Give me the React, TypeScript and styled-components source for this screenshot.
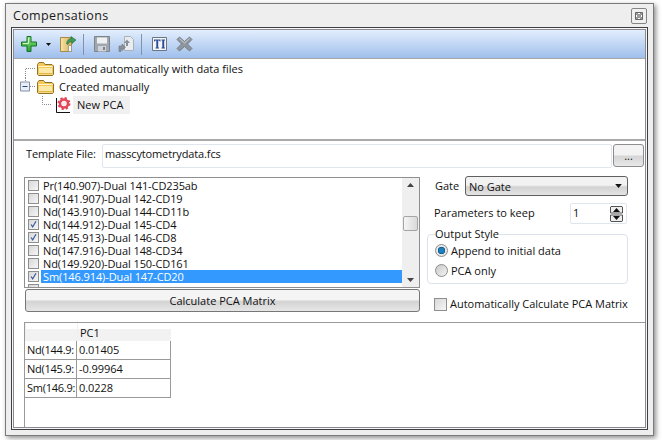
import React from "react";
import styled, { createGlobalStyle } from "styled-components";

const Global = createGlobalStyle`
  html, body { margin: 0; padding: 0; background: #fff; }
  body { font-family: "Open Sans", "Liberation Sans", sans-serif; font-size: 11px; color: #111; }
  * { box-sizing: border-box; }
`;

const Page = styled.div`
  width: 662px;
  height: 440px;
  padding: 3px 8px 4px 5px;
  overflow: hidden;
`;
const Window = styled.div`
  width: 649px;
  height: 433px;
  background: #eeeeee;
  border: 1px solid #7a7a7a;
  box-shadow: 2px 2px 5px rgba(0, 0, 0, 0.45);
  padding: 0 5px 5px 5px;
  display: flex;
  flex-direction: column;
`;
const TitleBar = styled.div`
  height: 23px;
  flex: none;
  display: flex;
  align-items: center;
  justify-content: space-between;
  padding: 0 1px 0 2px;
`;
const Title = styled.span`
  font-size: 12.5px;
  letter-spacing: 0.35px;
  color: #1a1a1a;
`;
const CloseButton = styled.button`
  width: 16px;
  height: 16px;
  padding: 0;
  border: 1px solid #858585;
  border-radius: 2px;
  background: #f1f1f1;
  display: flex;
  align-items: center;
  justify-content: center;
`;
const Outer = styled.div`
  flex: 1;
  min-height: 0;
  border: 1px solid #3f3f46;
  padding: 1px;
  background: #f6f6f6;
  display: flex;
`;
const Frame = styled.div`
  flex: 1;
  min-width: 0;
  border: 1px solid #8a8a90;
  background: #fff;
  display: flex;
  flex-direction: column;
`;
const Toolbar = styled.div`
  height: 29px;
  flex: none;
  background: linear-gradient(#e3eefd, #9fbfec);
  border-bottom: 1px solid #a8a8a8;
  display: flex;
  align-items: center;
  padding-left: 7px;
`;
const ToolIcon = styled.span<{ $gap?: number }>`
  display: flex;
  margin-right: ${(p) => p.$gap ?? 0}px;
`;
const ToolSep = styled.span`
  width: 1px;
  height: 21px;
  background: #7f93ad;
  margin: 0 10px 0 6px;
`;
const Tree = styled.div`
  height: 82px;
  flex: none;
  border-bottom: 2px solid #a9a9a9;
  padding-top: 1px;
  display: flex;
  flex-direction: column;
`;
const TreeRow = styled.div`
  height: 18px;
  display: flex;
  align-items: center;
  padding-left: 6px;
`;
const TreeIndent = styled.span`
  width: 22px;
  flex: none;
`;
const TreeLabel = styled.span<{ $selected?: boolean; $left?: number }>`
  margin-left: ${(p) => p.$left ?? 5}px;
  padding: ${(p) => (p.$selected ? "0 7px 0 4px" : "0")};
  height: 18px;
  line-height: 18px;
  background: ${(p) => (p.$selected ? "#f0f0f0" : "transparent")};
  white-space: nowrap;
`;
const Form = styled.div`
  flex: 1;
  min-height: 0;
  display: flex;
  flex-direction: column;
`;
const TemplateRow = styled.div`
  height: 25px;
  margin-top: 2px;
  flex: none;
  display: flex;
  align-items: center;
  padding: 0 1px 0 12px;
`;
const TemplateLabel = styled.span`
  width: 76px;
  flex: none;
  padding-bottom: 4px;
  letter-spacing: -0.1px;
`;
const TemplateInput = styled.div`
  flex: 1;
  height: 24px;
  border: 1px solid #dfe6ee;
  border-radius: 2px;
  padding: 0 2px;
  line-height: 17px;
  letter-spacing: -0.13px;
  background: #fff;
`;
const BrowseButton = styled.button`
  width: 31px;
  height: 23px;
  margin-left: 1px;
  padding: 0;
  border: 1px solid #8d8d8d;
  border-radius: 3px;
  background: linear-gradient(#f3f3f3 0 45%, #d6d6d6 55%, #e8e8e8);
  font: inherit;
  color: #111;
`;
const Middle = styled.div`
  height: 136px;
  margin-top: 8px;
  flex: none;
  display: flex;
  padding-left: 10px;
  gap: 7px;
`;
const LeftColumn = styled.div`
  width: 396px;
  flex: none;
  display: flex;
  flex-direction: column;
`;
const ListBox = styled.div`
  height: 111px;
  margin-top: 1px;
  border: 1px solid #8f8f8f;
  display: flex;
  overflow: hidden;
  background: #fff;
`;
const ListRows = styled.div`
  flex: 1;
  min-width: 0;
  overflow: hidden;
  padding: 1px 0 0 3px;
`;
const ListRow = styled.div`
  height: 13px;
  display: flex;
  align-items: center;
`;
const ListText = styled.span<{ $selected?: boolean }>`
  flex: 1;
  height: 13px;
  line-height: 13px;
  margin-left: 2px;
  padding-left: 2px;
  letter-spacing: -0.1px;
  background: ${(p) => (p.$selected ? "#3399ff" : "transparent")};
  color: ${(p) => (p.$selected ? "#fff" : "#111")};
  white-space: nowrap;
`;
const CheckBox = styled.span<{ $size?: number }>`
  width: ${(p) => p.$size ?? 11}px;
  height: ${(p) => p.$size ?? 11}px;
  flex: none;
  border: 1px solid #8e8e8e;
  background: linear-gradient(135deg, #d8d8d8, #f6f6f6);
  display: flex;
  align-items: center;
  justify-content: center;
`;
const ScrollBar = styled.div`
  width: 17px;
  flex: none;
  background: #efefef;
  display: flex;
  flex-direction: column;
  align-items: center;
`;
const ScrollArrow = styled.span`
  height: 14px;
  flex: none;
  display: flex;
  align-items: center;
  justify-content: center;
`;
const ScrollTrack = styled.div`
  flex: 1;
  align-self: stretch;
  padding: 24px 1px 0 1px;
`;
const ScrollThumb = styled.div`
  height: 15px;
  border: 1px solid #a5a5a5;
  border-radius: 2px;
  background: linear-gradient(90deg, #f5f5f5, #d9d9d9);
`;
const CalcButton = styled.button`
  height: 23px;
  margin: 1px 0 0 1px;
  padding: 0;
  border: 1px solid #777;
  border-radius: 3px;
  background: linear-gradient(#f4f4f4 0 45%, #d4d4d4 55%, #e6e6e6);
  font: inherit;
  color: #111;
`;
const RightColumn = styled.div`
  width: 201px;
  flex: none;
  display: flex;
  flex-direction: column;
`;
const GateRow = styled.div`
  height: 20px;
  display: flex;
  align-items: center;
  padding-left: 8px;
`;
const GateLabel = styled.span`
  width: 30px;
  flex: none;
  padding-bottom: 2px;
`;
const Select = styled.div`
  flex: 1;
  height: 20px;
  border: 1px solid #606060;
  border-radius: 3px;
  background: linear-gradient(#f2f2f2 0 45%, #d2d2d2 55%, #e4e4e4);
  display: flex;
  align-items: center;
  justify-content: space-between;
  padding: 0 5px 0 3px;
`;
const KeepRow = styled.div`
  height: 21px;
  margin-top: 7px;
  display: flex;
  align-items: center;
  padding-left: 7px;
`;
const KeepLabel = styled.span`
  width: 136px;
  flex: none;
  padding-bottom: 2px;
`;
const SpinBox = styled.div`
  width: 57px;
  height: 21px;
  border: 1px solid #dfe6ee;
  border-radius: 2px;
  background: #fff;
  display: flex;
  align-items: center;
  justify-content: space-between;
  padding: 0 3px 0 2px;
`;
const SpinValue = styled.span`
  padding-bottom: 2px;
`;
const SpinButtons = styled.span`
  display: flex;
`;
const Group = styled.fieldset`
  height: 56px;
  margin: 4px 0 0 0;
  padding: 0 0 0 7px;
  border: 1px solid #dbe3ec;
  border-radius: 4px;
  display: flex;
  flex-direction: column;
`;
const Legend = styled.legend`
  padding: 0;
  line-height: 12px;
  background: #fff;
`;
const RadioRow = styled.div`
  height: 20px;
  display: flex;
  align-items: center;
  gap: 3px;
`;
const Radio = styled.span<{ $on?: boolean }>`
  width: 13px;
  height: 13px;
  flex: none;
  border-radius: 50%;
  border: 1px solid #8c8c8c;
  background: ${(p) =>
    p.$on
      ? "radial-gradient(circle, #1b7fc0 0 2.6px, #0c4f7e 3.4px, #e6e6e6 4px)"
      : "linear-gradient(135deg, #c8c8c8, #f4f4f4)"};
`;
const AutoRow = styled.div`
  height: 14px;
  margin-top: 13px;
  display: flex;
  align-items: center;
  gap: 3px;
  padding-left: 7px;
  white-space: nowrap;
  letter-spacing: -0.02px;
`;
const AutoText = styled.span`
  padding-bottom: 2px;
`;
const TableBox = styled.div`
  flex: 1;
  margin: 10px 0 0 10px;
  min-height: 0;
  border-top: 1px solid #9a9a9a;
  border-left: 1px solid #9a9a9a;
`;
const Table = styled.div`
  width: 146px;
  display: grid;
  grid-template-columns: 52px 94px;
`;
const HeadCell = styled.div`
  height: 18px;
  background: linear-gradient(#ffffff 0 6px, #f2f2f2 6px);
  border-left: 1px solid #f0f0f0;
  padding: 3px 0 0 2px;
  line-height: 14px;
`;
const BodyCell = styled.div<{ $first?: boolean }>`
  height: 19px;
  line-height: 18px;
  border-bottom: 1px solid #9a9a9a;
  border-right: 1px solid #9a9a9a;
  padding-left: 2px;
  letter-spacing: ${(p) => (p.$first ? "-0.25px" : "-0.05px")};
  overflow: hidden;
  white-space: nowrap;
`;

const Plus = () => (
  <svg width="16" height="16" viewBox="0 0 16 16">
    <defs>
      <linearGradient id="pl" x1="0" y1="0" x2="0" y2="1">
        <stop offset="0" stopColor="#8fe07f" />
        <stop offset="1" stopColor="#27a52e" />
      </linearGradient>
    </defs>
    <path d="M6 .5h4v5.500h5.500v4H10v5.500H6V10H.5V6H6z" fill="url(#pl)" stroke="#12752a" />
    <path d="M7.500 2v5.500H2" fill="none" stroke="#d2f7c4" />
  </svg>
);
const Caret = ({ color = "#111", w = 5, h = 3 }: { color?: string; w?: number; h?: number }) => (
  <svg width={w} height={h} viewBox="0 0 5 3">
    <path d="M0 0h5L2.500 3z" fill={color} />
  </svg>
);
const UpCaret = () => (
  <svg width="7" height="4" viewBox="0 0 7 4">
    <path d="M0 4h7L3.500 0z" fill="#444" />
  </svg>
);
const DownCaret = () => (
  <svg width="7" height="4" viewBox="0 0 7 4">
    <path d="M0 0h7L3.500 4z" fill="#444" />
  </svg>
);
const LoadFile = () => (
  <svg width="17" height="17" viewBox="0 0 17 17">
    <defs>
      <linearGradient id="lf" x1="0" x2="1">
        <stop offset="0" stopColor="#f7e6a8" />
        <stop offset="1" stopColor="#d3ad5c" />
      </linearGradient>
    </defs>
    <path d="M.5 1.500h11v14H.5z" fill="url(#lf)" stroke="#a88a45" />
    <path d="M8.500 9.500h3v6h-3z" fill="#f8f8f4" stroke="#8a8a80" strokeWidth=".7" />
    <path d="M6.500 7.500c.5-3 2.500-5 5-5L11 .5 16 4l-4 3.500V5.500c-2 0-3.500 1-4 3z" fill="#3f9a55" stroke="#1e6d3a" strokeWidth=".6" />
  </svg>
);
const SaveIcon = () => (
  <svg width="16" height="16" viewBox="0 0 16 16">
    <path d="M.5.500h15v15H.5z" fill="#a0a7ae" stroke="#7c838a" />
    <path d="M3 1.500h10v6H3z" fill="#eef0f2" />
    <path d="M4 10h8v5.500H4z" fill="#cfd3d7" />
    <path d="M9 11h2v3H9z" fill="#7c838a" />
  </svg>
);
const ExportIcon = () => (
  <svg width="16" height="17" viewBox="0 0 16 17">
    <path d="M6.500.500h6l3 3v11h-9z" fill="#e9edf2" stroke="#aab0b6" />
    <path d="M1 15.500V10h3V8l3.500 3.200L4 14.500v-2H3v3z" fill="#8a9097" stroke="#6f757c" strokeWidth=".6" />
    <path d="M6 7l3-3.500L12 7h-2v3H8V7z" fill="#8a9097" />
  </svg>
);
const TextIcon = () => (
  <svg width="15" height="14" viewBox="0 0 15 14">
    <path d="M.5.500h14v13H.5z" fill="#f4f6f9" stroke="#6d7680" />
    <path d="M2 2.500h6.500v2H8L7 3.600H6.200V10.500H7v1H3.500v-1h.8V3.600H3.500L2.500 4.500H2z" fill="#2a4d96" />
    <path d="M9.500 2.500H13v1h-.8v7h.8v1H9.500v-1h.8v-7h-.8z" fill="#2a4d96" />
  </svg>
);
const CrossIcon = () => (
  <svg width="17" height="16" viewBox="0 0 17 16">
    <path d="M3.500 1L8.500 5.500 13.500 1 16 3.500 11.500 8 16 12.500 13.500 15 8.500 10.500 3.500 15 1 12.500 5.500 8 1 3.500z" fill="#8d959d" stroke="#6b727a" strokeWidth=".8" />
    <path d="M3.500 2.500L8.500 7 13.500 2.500" stroke="#ccd1d6" fill="none" />
  </svg>
);
const Folder = () => (
  <svg width="17" height="14" viewBox="0 0 17 14">
    <path d="M.5 12.500V2.500l1.500-2h4.500l1.500 2h7l1.500 1.500v8.500l-1 1H1.500z" fill="#f4c95a" stroke="#8f7226" />
    <path d="M1.500 4.500h14" stroke="#fff6d0" />
    <path d="M2 6h13v6.500H2z" fill="#fbe9a8" />
    <path d="M2 11.500h13" stroke="#e2b84c" />
  </svg>
);
const DOTS = "#8a8a8a";
const GuideTop = () => (
  <svg width="17" height="18" viewBox="0 0 17 18">
    <path d="M5.500 18V8.500H15" fill="none" stroke={DOTS} strokeDasharray="1 1" />
  </svg>
);
const GuideBox = () => (
  <svg width="17" height="18" viewBox="0 0 17 18">
    <path d="M5.500 0V4M10 8.500h5" fill="none" stroke={DOTS} strokeDasharray="1 1" />
    <path d="M.5 4h9v9h-9z" fill="#e9eef6" stroke="#8090a8" />
    <path d="M2.500 8.500h5" stroke="#2c4a7a" />
  </svg>
);
const LeafGuide = () => (
  <svg width="14" height="18" viewBox="0 0 14 18">
    <path d="M.500 0v8.500H10" fill="none" stroke={DOTS} strokeDasharray="1 1" />
  </svg>
);
const PcaIcon = () => (
  <svg width="15" height="16" viewBox="0 0 15 16">
    <path d="M.500 1v14.500H14" fill="none" stroke="#111" />
    <circle cx="8" cy="6.500" r="4" fill="none" stroke="#e2475a" strokeWidth="2.600" />
    <circle cx="8" cy="6.500" r="5.500" fill="none" stroke="#e2475a" strokeWidth="2" strokeDasharray="2.200 2.120" />
    <circle cx="8" cy="6.500" r="2.200" fill="#fbeaec" />
  </svg>
);
const Check = () => (
  <svg width="11" height="11" viewBox="0 0 11 11">
    <path d="M2.500 5.500L4.500 8.500 8.500 1.500" fill="none" stroke="#3a5a9c" strokeWidth="1.500" />
  </svg>
);
const CloseGlyph = () => (
  <svg width="10" height="10" viewBox="0 0 10 10">
    <path d="M1.500 1.500h7v7h-7z" fill="#fff" stroke="#555" strokeWidth=".9" />
    <path d="M2.500 2.500l5 5M7.500 2.500l-5 5" stroke="#444" strokeWidth="1.600" />
    <path d="M3 3l4 4M7 3l-4 4" stroke="#fff" strokeWidth=".5" />
  </svg>
);
const Spin = () => (
  <svg width="13" height="16" viewBox="0 0 13 16">
    <path d="M1 .500h11l.500.500v6H.500V1zM.500 9h12v6l-.500.500H1l-.500-.500z" fill="#eee" stroke="#555" />
    <path d="M6.500 2L10 6H3zM3 10h7l-3.500 4z" fill="#111" />
  </svg>
);

const channels: [string, boolean][] = [
  ["Pr(140.907)-Dual 141-CD235ab", false],
  ["Nd(141.907)-Dual 142-CD19", false],
  ["Nd(143.910)-Dual 144-CD11b", false],
  ["Nd(144.912)-Dual 145-CD4", true],
  ["Nd(145.913)-Dual 146-CD8", true],
  ["Nd(147.916)-Dual 148-CD34", false],
  ["Nd(149.920)-Dual 150-CD161", false],
  ["Sm(146.914)-Dual 147-CD20", true],
  ["", false],
];
const rows = [
  ["Nd(144.9:", "0.01405"],
  ["Nd(145.9:", "-0.99964"],
  ["Sm(146.9:", "0.0228"],
];

export default function App() {
  return (
    <Page>
      <Global />
      <Window>
        <TitleBar>
          <Title>Compensations</Title>
          <CloseButton aria-label="Close">
            <CloseGlyph />
          </CloseButton>
        </TitleBar>
        <Outer>
          <Frame>
            <Toolbar>
              <ToolIcon $gap={9}><Plus /></ToolIcon>
              <ToolIcon $gap={9}><Caret /></ToolIcon>
              <ToolIcon><LoadFile /></ToolIcon>
              <ToolSep />
              <ToolIcon $gap={8}><SaveIcon /></ToolIcon>
              <ToolIcon $gap={1}><ExportIcon /></ToolIcon>
              <ToolSep />
              <ToolIcon $gap={9}><TextIcon /></ToolIcon>
              <ToolIcon><CrossIcon /></ToolIcon>
            </Toolbar>
            <Tree>
              <TreeRow>
                <GuideTop />
                <Folder />
                <TreeLabel>Loaded automatically with data files</TreeLabel>
              </TreeRow>
              <TreeRow>
                <GuideBox />
                <Folder />
                <TreeLabel>Created manually</TreeLabel>
              </TreeRow>
              <TreeRow>
                <TreeIndent />
                <LeafGuide />
                <PcaIcon />
                <TreeLabel $selected $left={2}>New PCA</TreeLabel>
              </TreeRow>
            </Tree>
            <Form>
              <TemplateRow>
                <TemplateLabel>Template File:</TemplateLabel>
                <TemplateInput>masscytometrydata.fcs</TemplateInput>
                <BrowseButton>...</BrowseButton>
              </TemplateRow>
              <Middle>
                <LeftColumn>
                  <ListBox>
                    <ListRows>
                      {channels.map(([name, checked], i) => (
                        <ListRow key={i}>
                          <CheckBox>{checked && <Check />}</CheckBox>
                          <ListText $selected={i === 7}>{name}</ListText>
                        </ListRow>
                      ))}
                    </ListRows>
                    <ScrollBar>
                      <ScrollArrow><UpCaret /></ScrollArrow>
                      <ScrollTrack><ScrollThumb /></ScrollTrack>
                      <ScrollArrow><DownCaret /></ScrollArrow>
                    </ScrollBar>
                  </ListBox>
                  <CalcButton>Calculate PCA Matrix</CalcButton>
                </LeftColumn>
                <RightColumn>
                  <GateRow>
                    <GateLabel>Gate</GateLabel>
                    <Select>
                      <span>No Gate</span>
                      <Caret w={7} h={4} />
                    </Select>
                  </GateRow>
                  <KeepRow>
                    <KeepLabel>Parameters to keep</KeepLabel>
                    <SpinBox>
                      <SpinValue>1</SpinValue>
                      <SpinButtons><Spin /></SpinButtons>
                    </SpinBox>
                  </KeepRow>
                  <Group>
                    <Legend>Output Style</Legend>
                    <RadioRow>
                      <Radio $on />
                      Append to initial data
                    </RadioRow>
                    <RadioRow>
                      <Radio />
                      PCA only
                    </RadioRow>
                  </Group>
                  <AutoRow>
                    <CheckBox $size={13} />
                    <AutoText>Automatically Calculate PCA Matrix</AutoText>
                  </AutoRow>
                </RightColumn>
              </Middle>
              <TableBox>
                <Table>
                  <HeadCell />
                  <HeadCell>PC1</HeadCell>
                  {rows.map(([a, b]) => (
                    <React.Fragment key={a}>
                      <BodyCell $first>{a}</BodyCell>
                      <BodyCell>{b}</BodyCell>
                    </React.Fragment>
                  ))}
                </Table>
              </TableBox>
            </Form>
          </Frame>
        </Outer>
      </Window>
    </Page>
  );
}
